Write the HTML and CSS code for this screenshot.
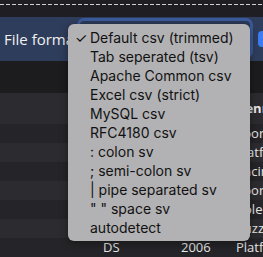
FILE: index.html
```html
<!DOCTYPE html>
<html>
<head>
<meta charset="utf-8">
<link rel="stylesheet" href="styles.css">
</head>
<body>
<div class="top_strip"></div>
<div class="toolbar">
	<label class="label">File format</label>
	<div class="select"></div>
	<div class="btn"></div>
</div>
<div class="filter_row"></div>
<div class="table">
	<div class="row head">
		<div></div><div>Platform</div><div>Year</div><div>Genre</div>
	</div>
	<div class="row"><div></div><div>Wii</div><div>2006</div><div>Sports</div></div>
	<div class="row odd"><div></div><div>NES</div><div>1985</div><div>Platform</div></div>
	<div class="row"><div></div><div>Wii</div><div>2008</div><div>Racing</div></div>
	<div class="row odd"><div></div><div>Wii</div><div>2009</div><div>Sports</div></div>
	<div class="row"><div></div><div>GB</div><div>1996</div><div>Role-Playing</div></div>
	<div class="row odd"><div></div><div>GB</div><div>1989</div><div>Puzzle</div></div>
	<div class="row"><div></div><div>DS</div><div>2006</div><div>Platform</div></div>
</div>
<ul class="menu">
	<li class="checked">Default csv (trimmed)</li>
	<li>Tab seperated (tsv)</li>
	<li>Apache Common csv</li>
	<li>Excel csv (strict)</li>
	<li>MySQL csv</li>
	<li>RFC4180 csv</li>
	<li>: colon sv</li>
	<li>; semi-colon sv</li>
	<li>| pipe separated sv</li>
	<li>" " space sv</li>
	<li>autodetect</li>
</ul>
</body>
</html>
```
FILE: styles.css
```css
body, div, ul, li {
	margin: 0;
	padding: 0;
}
body {
	background: #1f1e22;
	font-family: "Open Sans", sans-serif;
	color: #e6e6e6;
	overflow: hidden;
	width: 263px;
	height: 257px;
}
.top_strip {
	height: 17px;
	padding-top: 4px;
	box-sizing: border-box;
}
.top_strip::before {
	content: "";
	display: block;
	height: 1px;
	background: repeating-linear-gradient(90deg, #d0d0d0 0 4px, transparent 4px 6px);
}
.toolbar {
	height: 44px;
	background: #2f3d5c;
	display: flex;
	align-items: center;
	padding-left: 4px;
	gap: 0;
	overflow: hidden;
}
.label {
	width: 73px;
	flex: none;
	font-size: 15px;
	color: #f0f0f0;
	white-space: nowrap;
}
.select {
	width: 176px;
	height: 40px;
	flex: none;
	box-sizing: border-box;
	border: 3px solid #3a5b9c;
	border-radius: 7px;
	background: #2b3a58;
	margin-top: -2px;
}
.btn {
	width: 20px;
	height: 16px;
	flex: none;
	margin-left: 5px;
	border-radius: 4px;
	background: #3b7cf2;
}
.filter_row {
	height: 32px;
	background: #1c1b1e;
}
.table {
	font-size: 13px;
}
.row {
	display: grid;
	grid-template-columns: 97px 78px 55px 1fr;
	height: 19px;
	line-height: 19px;
	background: #252428;
	white-space: nowrap;
}
.row.odd {
	background: #2c2b2f;
}
.row > div {
	padding-left: 6px;
	overflow: hidden;
}
.row.head {
	height: 31px;
	line-height: 31px;
	background: #2c2b2f;
	font-weight: bold;
}
.menu {
	position: absolute;
	left: 68px;
	top: 24px;
	width: 182px;
	height: 217px;
	box-sizing: border-box;
	padding: 4px 0;
	list-style: none;
	background: #b2b1b4;
	border-radius: 6px;
	box-shadow: 0 2px 8px rgba(0, 0, 0, 0.4);
	font-family: Inter, "Liberation Sans", sans-serif;
	font-size: 14px;
	color: #111;
}
.menu li {
	position: relative;
	height: 19px;
	line-height: 19px;
	padding-left: 22px;
	white-space: nowrap;
}
.menu li.checked::before {
	content: "✓";
	position: absolute;
	left: 7px;
	top: 0;
}
```
